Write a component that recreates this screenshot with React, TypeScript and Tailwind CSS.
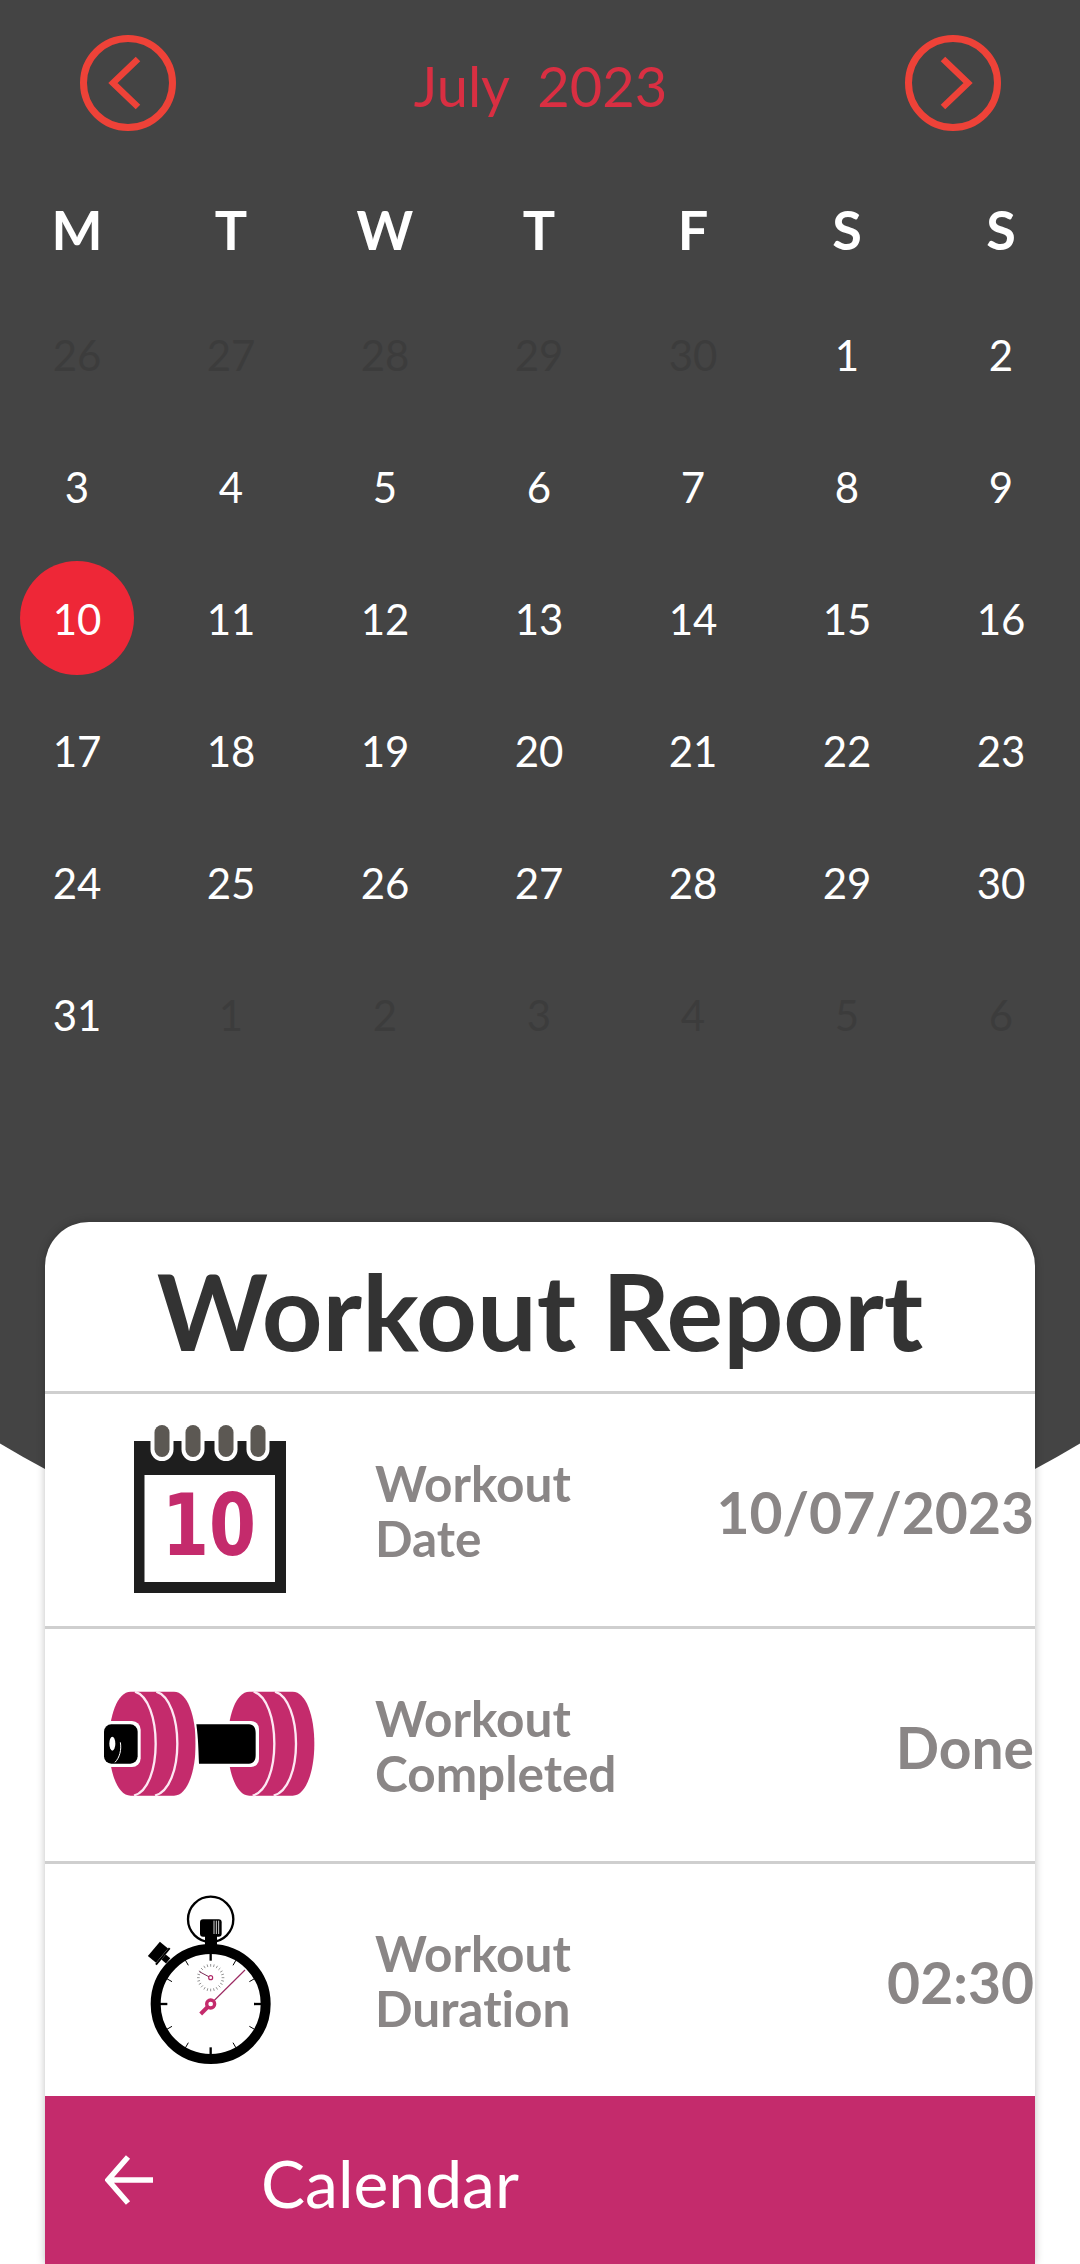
const font = "font-['Lato','Noto_Sans',sans-serif] [font-variant-ligatures:none]";

const ROWS: [string, boolean][][] = [
  [["26", true], ["27", true], ["28", true], ["29", true], ["30", true], ["1", false], ["2", false]],
  [["3", false], ["4", false], ["5", false], ["6", false], ["7", false], ["8", false], ["9", false]],
  [["10", false], ["11", false], ["12", false], ["13", false], ["14", false], ["15", false], ["16", false]],
  [["17", false], ["18", false], ["19", false], ["20", false], ["21", false], ["22", false], ["23", false]],
  [["24", false], ["25", false], ["26", false], ["27", false], ["28", false], ["29", false], ["30", false]],
  [["31", false], ["1", true], ["2", true], ["3", true], ["4", true], ["5", true], ["6", true]],
];
const DAYS = ["M", "T", "W", "T", "F", "S", "S"];

function Chevron({ right }: { right?: boolean }) {
  return (
    <svg width="96" height="96" viewBox="0 0 96 96" fill="none">
      <circle cx="48" cy="48" r="44.5" stroke="#ee4238" strokeWidth="7" />
      <path d={right ? "M38 24 L63 48 L38 72" : "M58 24 L33 48 L58 72"} stroke="#ee4238" strokeWidth="6.5" />
    </svg>
  );
}

function CalendarIcon() {
  return (
    <svg width="152" height="170" viewBox="0 0 152 170">
      <rect x="0" y="16" width="152" height="152" fill="#1e1e1e" />
      <rect x="10.5" y="50" width="130.5" height="107" fill="#fff" />
      {[28, 59, 92, 124].map((x) => (
        <g key={x}>
          <rect x={x - 11.5} y="0" width="23" height="36" rx="11.5" fill="#fff" />
          <rect x={x - 7.5} y="0" width="15" height="32" rx="7.5" fill="#5c5853" />
        </g>
      ))}
      <text x="75" y="130" textAnchor="middle" fontFamily="'DejaVu Sans'" fontWeight="700" fontSize="85" fill="#c42b6c" textLength="94" lengthAdjust="spacingAndGlyphs">10</text>
    </svg>
  );
}

function Weight({ x }: { x: number }) {
  return (
    <g transform={`translate(${x} 0)`}>
      <path d="M155 98 H285 C325 98 350 170 350 254 C350 338 325 410 285 410 H155 C115 410 90 338 90 254 C90 170 115 98 155 98 Z" fill="#c42b6c" />
      <path d="M168 98 C208 110 230 180 230 254 C230 328 208 398 165 410" stroke="#fde8f3" strokeWidth="7" fill="none" />
      <path d="M232 98 C272 110 295 180 295 254 C295 328 272 398 228 410" stroke="#fde8f3" strokeWidth="7" fill="none" />
    </g>
  );
}

function DumbbellIcon() {
  return (
    <svg width="280" height="180" viewBox="0 0 840 540" className="mt-[8px] ml-[18px]">
      <Weight x={0} />
      <Weight x={356} />
      <rect x="60" y="186" width="125" height="138" rx="26" fill="#fff" />
      <rect x="75" y="196" width="101" height="118" rx="22" fill="#000" />
      <ellipse cx="100" cy="254" rx="9" ry="21" fill="#fff" />
      <path d="M124 250 C128 272 122 296 108 310" stroke="#fff" strokeWidth="3" fill="none" />
      <rect x="352" y="186" width="188" height="138" rx="24" fill="#fff" />
      <rect x="350" y="180" width="20" height="150" fill="#fff" />
      <path d="M352 196 H510 C524 196 530 208 530 222 V288 C530 304 524 314 510 314 H360 C358 270 358 240 352 196 Z" fill="#000" />
    </svg>
  );
}

function StopwatchIcon() {
  const ticks = Array.from({ length: 12 }, (_, i) => (i * 30 * Math.PI) / 180);
  const small = Array.from({ length: 24 }, (_, i) => (i * 15 * Math.PI) / 180);
  return (
    <svg width="180" height="190" viewBox="0 0 540 570" className="mb-[10px]">
      <circle cx="272" cy="118" r="68" fill="none" stroke="#000" strokeWidth="7" />
      <rect x="240" y="118" width="65" height="52" rx="9" fill="#000" />
      <path d="M282 122 V162 M289 122 V162 M296 122 V162" stroke="#fff" strokeWidth="2.5" />
      <rect x="255" y="168" width="36" height="35" fill="#000" />
      <g transform="rotate(-50 120 222)">
        <rect x="92" y="198" width="56" height="32" fill="#000" />
        <rect x="88" y="230" width="64" height="6" fill="#000" />
        <rect x="110" y="236" width="20" height="18" fill="#000" />
      </g>
      <circle cx="272" cy="372" r="165" fill="#fff" stroke="#000" strokeWidth="30" />
      {ticks.map((a, i) => {
        const big = i % 3 === 0;
        const r0 = 152;
        const r1 = big ? 130 : 134;
        return (
          <line
            key={i}
            x1={272 + Math.sin(a) * r0}
            y1={372 - Math.cos(a) * r0}
            x2={272 + Math.sin(a) * r1}
            y2={372 - Math.cos(a) * r1}
            stroke="#000"
            strokeWidth={big ? 7 : 3}
          />
        );
      })}
      {small.map((a, i) => (
        <line
          key={i}
          x1={272 + Math.sin(a) * 33}
          y1={293 - Math.cos(a) * 33}
          x2={272 + Math.sin(a) * 41}
          y2={293 - Math.cos(a) * 41}
          stroke="#333"
          strokeWidth="1.6"
        />
      ))}
      <line x1="272" y1="293" x2="238" y2="275" stroke="#7a2a55" strokeWidth="3" />
      <circle cx="272" cy="293" r="6" fill="#fff" stroke="#b02a68" strokeWidth="3.5" />
      <path d="M272 372 L375 270" stroke="#9c2a62" strokeWidth="3.5" />
      <path d="M272 372 L242 402" stroke="#c42b6c" strokeWidth="12" />
      <circle cx="272" cy="372" r="12" fill="#fff" stroke="#c42b6c" strokeWidth="10" />
    </svg>
  );
}

function ReportRow({ icon, a, b, value, last }: { icon: React.ReactNode; a: string; b: string; value: string; last?: boolean }) {
  return (
    <div className={`flex shrink-0 items-center pr-px ${last ? "h-[232px]" : "h-[235px] border-b-[3px] border-[#cfcfcf]"}`}>
      <div className="flex w-[330px] shrink-0 items-center justify-center">{icon}</div>
      <div className="flex-1 pt-[2px] text-[49.5px] leading-[55px] font-bold text-[#8a8686]">
        <div>{a}</div>
        <div>{b}</div>
      </div>
      <div className="mt-[6px] text-[57px] font-bold text-[#8a8686]">{value}</div>
    </div>
  );
}

export default function App() {
  return (
    <div className={`relative h-[2264px] w-[1080px] overflow-hidden bg-white ${font}`}>
      <div className="absolute top-0 left-[-510px] h-[1593px] w-[2100px] rounded-b-[1050px] bg-[#444444]" />
      <div className="relative flex h-full flex-col">
        <div className="flex items-center justify-between pt-[35px] pr-[79px] pl-[80px]">
          <Chevron />
          <div className="mt-[6px] text-[56px] leading-[90px] whitespace-pre text-[#d92f42]">July  2023</div>
          <Chevron right />
        </div>
        <div className="mt-[71px] grid grid-cols-7 pr-[2px]">
          {DAYS.map((d, i) => (
            <div key={i} className="text-center text-[54px] leading-[56px] font-bold text-white">{d}</div>
          ))}
        </div>
        <div className="mt-[31px] flex flex-col pr-[2px]">
          {ROWS.map((row, r) => (
            <div key={r} className="grid h-[132px] grid-cols-7">
              {row.map(([n, off], c) => (
                <div key={c} className="flex items-center justify-center">
                  <div className={`flex h-[114px] w-[114px] items-center justify-center rounded-full text-[42px] ${n === "10" && !off ? "mb-[2px] bg-[#ee2737] pt-[2px]" : ""} ${off ? "text-[#3c3c3c]" : "text-white"}`}>{n}</div>
                </div>
              ))}
            </div>
          ))}
        </div>
        <div className="mx-[45px] mt-[141px] flex flex-1 flex-col overflow-hidden rounded-t-[44px] bg-white shadow-[0_0_8px_rgba(0,0,0,0.25)]">
          <div className="flex h-[172px] shrink-0 items-center justify-center border-b-[3px] border-[#cfcfcf] pt-[8px] text-[106px] font-bold text-[#333333]">Workout Report</div>
          <ReportRow icon={<CalendarIcon />} a="Workout" b="Date" value="10/07/2023" />
          <ReportRow icon={<DumbbellIcon />} a="Workout" b="Completed" value="Done" />
          <ReportRow icon={<StopwatchIcon />} a="Workout" b="Duration" value="02:30" last />
          <div className="flex flex-1 items-center bg-[#c42b6c] pl-[60px] text-white">
            <svg width="48" height="52" viewBox="0 0 48 52" fill="none">
              <path d="M23 3 L3 26 L23 49 M3 26 H48" stroke="#fff" strokeWidth="5.5" />
            </svg>
            <span className="mt-[4px] ml-[108px] text-[66px]">Calendar</span>
          </div>
        </div>
      </div>
    </div>
  );
}
